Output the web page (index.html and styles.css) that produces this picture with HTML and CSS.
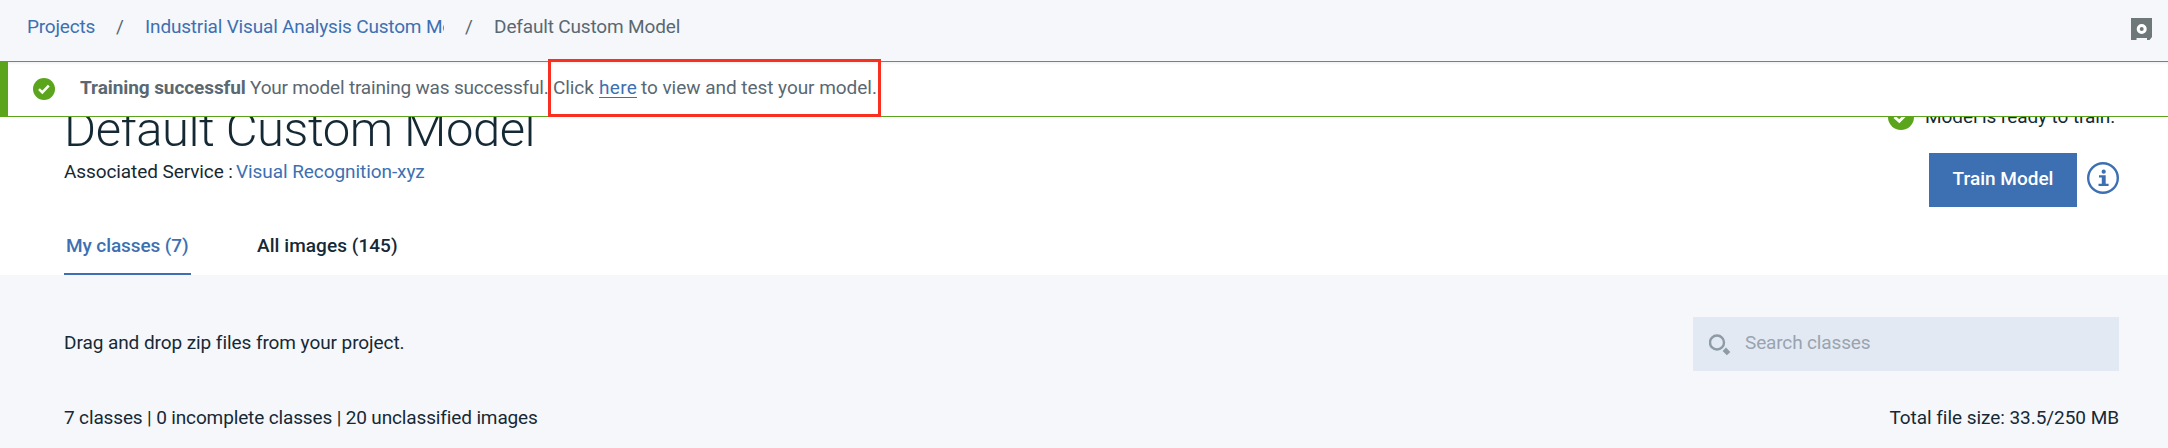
FILE: index.html
```html
<!DOCTYPE html>
<html lang="en">
<head>
<meta charset="utf-8">
<title>Default Custom Model</title>
<link rel="stylesheet" href="styles.css">
</head>
<body>
<header class="topbar">
  <nav class="crumbs">
    <a class="crumb" href="#">Projects</a>
    <span class="slash">/</span>
    <a class="crumb crumb-clip" href="#">Industrial Visual Analysis Custom Model</a>
    <span class="slash">/</span>
    <span class="current">Default Custom Model</span>
  </nav>
  <svg class="vault" width="21" height="22" viewBox="0 0 21 22">
    <path d="M0 0H21V19L18.5 22H16V20H5.5V22H0Z" fill="#6f7878"/>
    <circle cx="10.7" cy="11" r="3.5" fill="none" stroke="#fff" stroke-width="3"/>
  </svg>
</header>

<div class="banner">
  <svg class="banner-icon" width="22" height="22" viewBox="0 0 22 22">
    <circle cx="11" cy="11" r="11" fill="#5aa51b"/>
    <path d="M6 11.2L9.3 14.4L15.8 7.6" fill="none" stroke="#fff" stroke-width="2.5"/>
  </svg>
  <strong class="banner-title">Training successful</strong>
  <span class="banner-text">Your model training was successful.</span>
  <div class="banner-action"><span class="click">Click</span><a class="here" href="#">here</a><span class="rest">to view and test your model.</span></div>
</div>
<div class="highlight"></div>

<main>
  <section class="hero">
    <div class="hero-left">
      <h1>Default Custom Model</h1>
      <p class="service"><span class="service-label">Associated Service :</span><a href="#">Visual Recognition-xyz</a></p>
      <div class="tabs">
        <div class="tab tab-active">My classes (7)</div>
        <div class="tab tab-all">All images (145)</div>
      </div>
    </div>
    <div class="hero-right">
      <div class="ready">
        <svg width="26" height="26" viewBox="0 0 26 26">
          <circle cx="13" cy="13" r="13" fill="#5aa51b"/>
          <path d="M6.5 13L11.3 17.3L19 9.5" fill="none" stroke="#fff" stroke-width="3"/>
        </svg>
        <span>Model is ready to train.</span>
      </div>
      <div class="actions">
        <button class="train" type="button">Train Model</button>
        <svg class="info" width="32" height="32" viewBox="0 0 32 32">
          <circle cx="16" cy="16" r="14.8" fill="none" stroke="#3d70b2" stroke-width="2.4"/>
          <circle cx="16.7" cy="9.7" r="2.1" fill="#3d70b2"/>
          <path d="M12 13.2H18.7V21.7H21.6V24H11.5V21.7H14.8V15.4H12Z" fill="#3d70b2"/>
        </svg>
      </div>
    </div>
  </section>

  <section class="panel">
    <div class="row row-search">
      <span class="drag">Drag and drop zip files from your project.</span>
      <div class="search">
        <svg width="22" height="22" viewBox="0 0 22 22">
          <circle cx="8" cy="8.5" r="7" fill="none" stroke="#8c9ba5" stroke-width="2.4"/>
          <path d="M15.3 15.3L19.6 19.6" stroke="#8c9ba5" stroke-width="4.8"/>
        </svg>
        <span>Search classes</span>
      </div>
    </div>
    <div class="row row-stats">
      <span class="stats">7 classes | 0 incomplete classes | 20 unclassified images</span>
      <span class="size">Total file size: 33.5/250 MB</span>
    </div>
  </section>
</main>
</body>
</html>
```
FILE: styles.css
```css
* { box-sizing: border-box; }

body {
  margin: 0;
  width: 2168px;
  height: 448px;
  position: relative;
  overflow: hidden;
  background: #f5f7fb;
  color: #152935;
  font: 19px/24px Roboto, "Liberation Sans", sans-serif;
  white-space: nowrap;
}

a { color: #3d70b2; text-decoration: none; }
h1, p { margin: 0; }

/* Breadcrumb bar */
.topbar {
  display: flex;
  justify-content: space-between;
  height: 61px;
  padding: 15px 16px 0 27px;
}
.crumbs { display: flex; color: #5a6872; }
.crumb { letter-spacing: -0.2px; }
.crumb-clip { width: 299px; overflow: hidden; letter-spacing: -0.18px; }
.slash { width: 50px; padding-left: 21px; }
.current { letter-spacing: -0.16px; }
.vault { margin-top: 3px; }

/* Notification, laid over the page heading */
.banner {
  position: absolute;
  top: 61px;
  left: 0;
  z-index: 1;
  display: flex;
  align-items: center;
  width: 100%;
  height: 56px;
  padding: 0 0 2px 25px;
  border: solid #5aa51b;
  border-width: 1px 0 1px 8px;
  background: #fff;
  box-shadow: inset 0 3px 3px -2px rgba(0, 0, 0, 0.08);
  color: #5a6872;
}
.banner-icon { margin-top: 2px; }
.banner-title { margin-left: 25px; width: 170px; font-weight: 700; letter-spacing: -0.08px; }
.banner-text { width: 303px; letter-spacing: -0.18px; }
.banner-action { display: flex; }
.click { width: 46px; letter-spacing: -0.1px; }
.here { width: 38px; height: 22px; line-height: 24px; border-bottom: 1px solid #3d70b2; letter-spacing: 0.3px; }
.rest { margin-left: 4px; letter-spacing: -0.04px; }

.highlight {
  position: absolute;
  top: 59px;
  left: 548px;
  z-index: 2;
  width: 333px;
  height: 58px;
  border: 3px solid #f9301f;
}

/* Model heading */
.hero {
  display: flex;
  justify-content: space-between;
  height: 214px;
  padding: 0 49px 0 64px;
  background: #fff;
}
.hero-left { padding-top: 39px; }
h1 {
  font-size: 49px;
  line-height: 60px;
  font-weight: 300;
  letter-spacing: -0.48px;
}
.service { line-height: 24px; letter-spacing: -0.07px; }
.service-label { display: inline-block; width: 172px; letter-spacing: -0.09px; }
.tabs { display: flex; gap: 66px; margin-top: 47px; }
.tab { height: 44px; font-weight: 500; line-height: 30px; }
.tab-active {
  width: 127px;
  padding-left: 2px;
  border-bottom: 2px solid #3d70b2;
  color: #3d70b2;
  letter-spacing: -0.1px;
}
.tab-all { letter-spacing: 0.06px; }

.hero-right { padding-top: 43px; }
.ready { display: flex; align-items: center; gap: 11px; height: 26px; margin-left: -41px; letter-spacing: -0.08px; }
.actions { display: flex; align-items: center; gap: 10px; margin-top: 23px; }
.train {
  width: 148px;
  height: 54px;
  padding: 0 0 2px;
  border: 0;
  background: #3d70b2;
  color: #fff;
  font: 500 19px/24px Roboto, "Liberation Sans", sans-serif;
}
.info { margin-top: -4px; }

/* Classes panel */
.panel { padding: 42px 49px 0 64px; }
.row { display: flex; align-items: center; justify-content: space-between; }
.row-search { height: 54px; }
.drag { margin-top: -3px; letter-spacing: -0.07px; }
.search {
  display: flex;
  align-items: center;
  gap: 14px;
  width: 426px;
  height: 54px;
  padding: 0 0 2px 16px;
  background: #e2e9f3;
  color: #98a4b0;
  letter-spacing: -0.15px;
}
.search svg { margin-top: 3px; }
.row-stats { height: 24px; margin-top: 35px; }
.stats { letter-spacing: -0.14px; }
.size { letter-spacing: -0.05px; }
```
